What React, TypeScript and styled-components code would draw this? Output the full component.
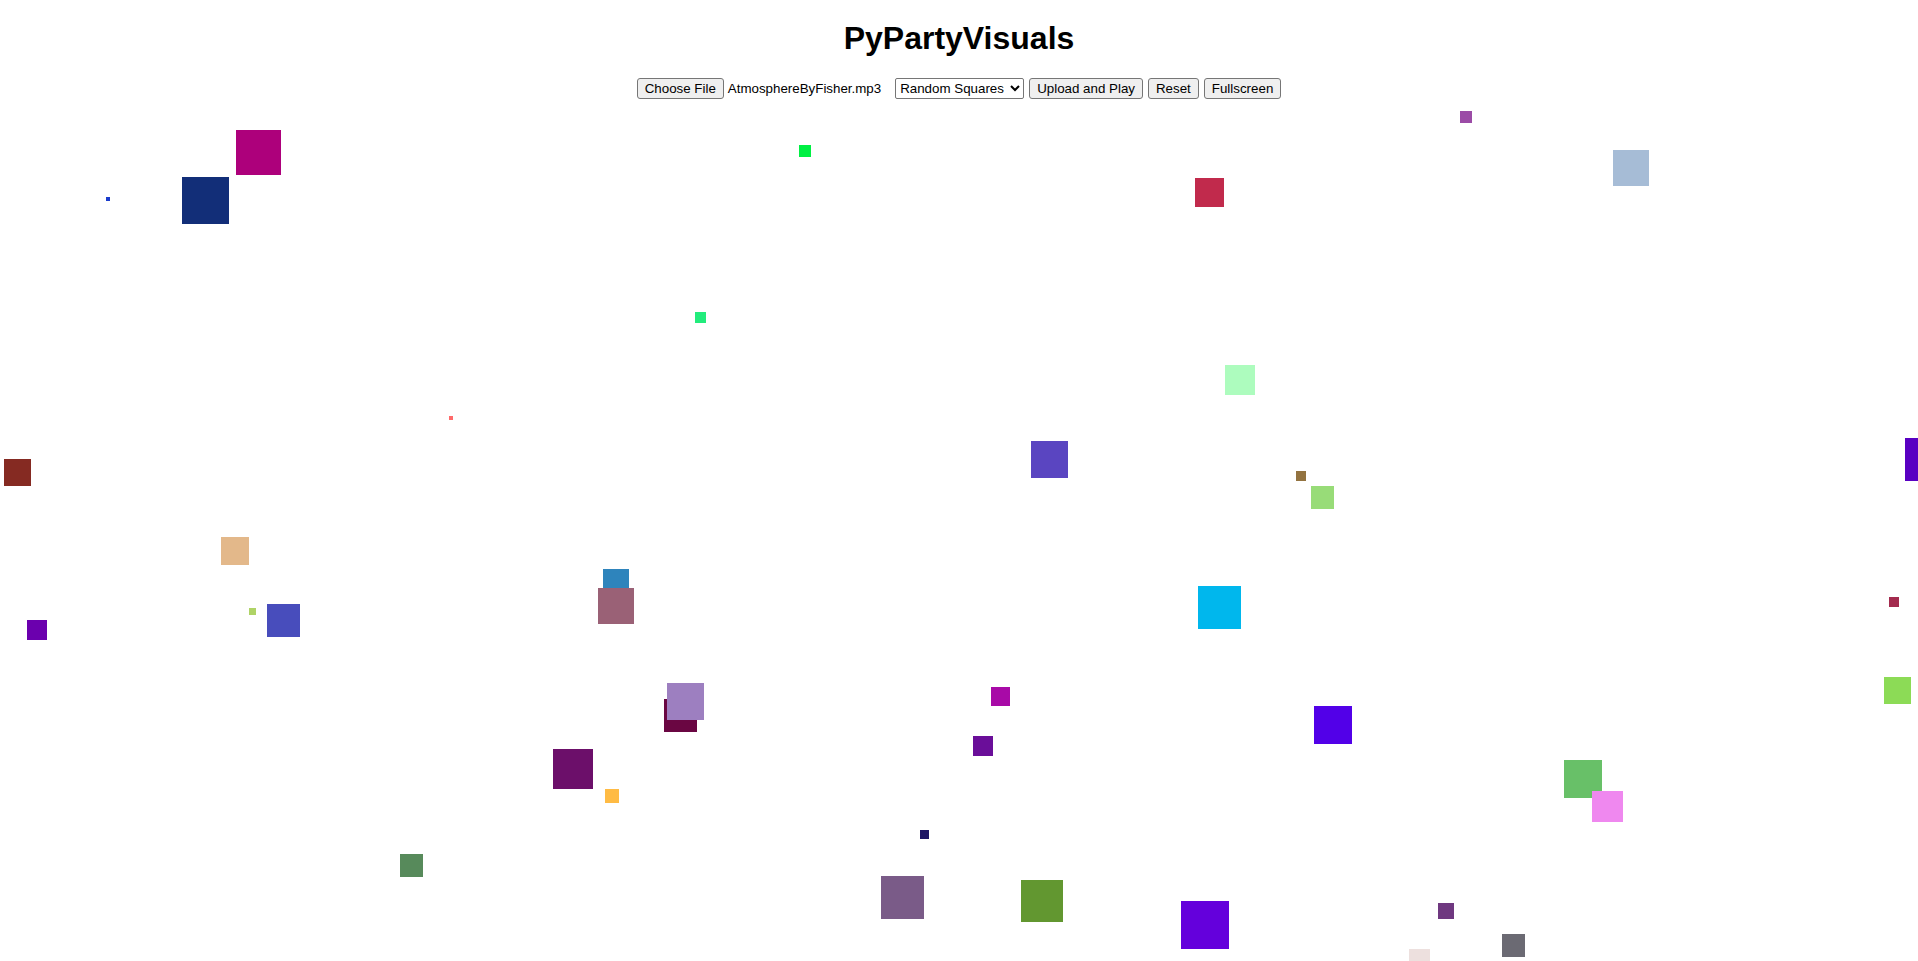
import React from "react";
import styled, { createGlobalStyle } from "styled-components";

const GlobalStyle = createGlobalStyle`
  html, body {
    margin: 0;
    padding: 0;
    background: #ffffff;
    overflow: hidden;
  }
  body {
    font-family: "Liberation Sans", Arial, sans-serif;
    color: #000000;
  }
`;

const Page = styled.div`
  display: flex;
  flex-direction: column;
  height: 100vh;
  overflow: hidden;
`;

const Title = styled.h1`
  margin: 20px 0 21px;
  font-family: "Liberation Sans", Arial, sans-serif;
  font-size: 32px;
  font-weight: bold;
  line-height: 37px;
  text-align: center;
`;

const Controls = styled.div`
  display: flex;
  justify-content: center;
  align-items: center;
  gap: 5px;
  height: 21px;
  margin-bottom: 1px;
  font-family: "Liberation Sans", Arial, sans-serif;
  font-size: 13.333px;
`;

const FilePicker = styled.label`
  display: flex;
  align-items: center;
  gap: 4px;
  margin-right: 9px;
`;

const FileName = styled.span`
  font-size: 13.333px;
  white-space: nowrap;
`;

const Button = styled.button`
  font-family: "Liberation Sans", Arial, sans-serif;
  font-size: 13.333px;
  height: 21px;
  padding: 1px 7px;
  color: #000000;
  background: #efefef;
  border: 1px solid #767676;
  border-radius: 3px;
  line-height: normal;
`;

const Picker = styled.select`
  font-family: "Liberation Sans", Arial, sans-serif;
  font-size: 13.333px;
  height: 21px;
  width: 129px;
  color: #000000;
  background: #ffffff;
  border: 1px solid #767676;
  border-radius: 2px;
`;

const Stage = styled.div`
  flex: 1;
  position: relative;
  overflow: hidden;
`;

const Canvas = styled.svg`
  display: block;
  width: 100%;
  height: 100%;
`;

type Sq = [number, number, number, string];

const squares: Sq[] = [
  [106, 197, 4, "#1a3ccc"],
  [236, 130, 45, "#ad007b"],
  [182, 177, 47, "#122e78"],
  [449, 416, 4, "#ff6a6a"],
  [799, 145, 12, "#00f043"],
  [1195, 178, 29, "#c12a4c"],
  [695, 312, 11, "#22ec7c"],
  [1225, 365, 30, "#adfcbe"],
  [1460, 111, 12, "#9b4ba6"],
  [1613, 150, 36, "#a6bcd6"],
  [4, 459, 27, "#852a22"],
  [221, 537, 28, "#e3b88a"],
  [603, 569, 26, "#2e84bc"],
  [598, 588, 36, "#9a6176"],
  [249, 608, 7, "#afd366"],
  [267, 604, 33, "#484dbc"],
  [27, 620, 20, "#6b00ae"],
  [1031, 441, 37, "#5a45c1"],
  [1198, 586, 43, "#00b7ed"],
  [664, 699, 33, "#6a0642"],
  [667, 683, 37, "#9d7fc0"],
  [991, 687, 19, "#a80aa7"],
  [1905, 438, 43, "#5900c2"],
  [1296, 471, 10, "#937340"],
  [1311, 486, 23, "#98dc78"],
  [1889, 597, 10, "#a32b4e"],
  [1884, 677, 27, "#8cdb56"],
  [1314, 706, 38, "#5200e8"],
  [553, 749, 40, "#6c0f6a"],
  [605, 789, 14, "#ffbb44"],
  [920, 830, 9, "#1d1564"],
  [400, 854, 23, "#578a5b"],
  [881, 876, 43, "#7a5b88"],
  [973, 736, 20, "#6a0e99"],
  [1564, 760, 38, "#68c068"],
  [1592, 791, 31, "#ef88ef"],
  [1021, 880, 42, "#629730"],
  [1181, 901, 48, "#6400dc"],
  [1438, 903, 16, "#6f3880"],
  [1502, 934, 23, "#6b6a73"],
  [1409, 949, 21, "#ede0de"],
];

export default function App() {
  return (
    <Page>
      <GlobalStyle />
      <Title>PyPartyVisuals</Title>
      <Controls>
        <FilePicker>
          <Button type="button">Choose File</Button>
          <FileName>AtmosphereByFisher.mp3</FileName>
        </FilePicker>
        <Picker defaultValue="squares">
          <option value="squares">Random Squares</option>
          <option value="circles">Random Circles</option>
          <option value="bars">Frequency Bars</option>
        </Picker>
        <Button type="button">Upload and Play</Button>
        <Button type="button">Reset</Button>
        <Button type="button">Fullscreen</Button>
      </Controls>
      <Stage>
        <Canvas viewBox="0 100 1918 861" preserveAspectRatio="xMinYMin slice">
          {squares.map(([x, y, s, c], i) => (
            <rect key={i} x={x} y={y} width={s} height={s} fill={c} />
          ))}
        </Canvas>
      </Stage>
    </Page>
  );
}
